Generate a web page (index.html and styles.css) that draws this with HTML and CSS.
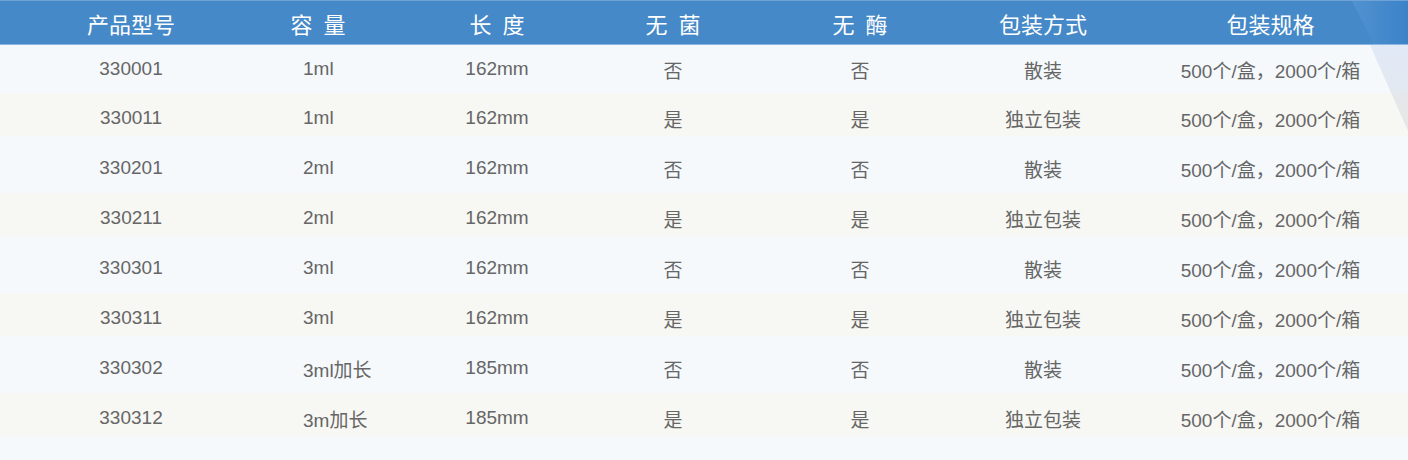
FILE: index.html
```html
<!DOCTYPE html>
<html lang="zh-CN">
<head>
<meta charset="utf-8">
<title>产品规格</title>
<link rel="stylesheet" href="styles.css">
</head>
<body>
<div class="page">
  <div class="table">
    <div class="row head">
      <div class="cell">产品型号</div>
      <div class="cell">容 量</div>
      <div class="cell">长 度</div>
      <div class="cell">无 菌</div>
      <div class="cell">无 酶</div>
      <div class="cell">包装方式</div>
      <div class="cell">包装规格</div>
    </div>
    <div class="row body first">
      <div class="cell">330001</div><div class="cell">1ml</div><div class="cell">162mm</div><div class="cell">否</div><div class="cell">否</div><div class="cell">散装</div><div class="cell">500个/盒，2000个/箱</div>
    </div>
    <div class="row body alt">
      <div class="cell">330011</div><div class="cell">1ml</div><div class="cell">162mm</div><div class="cell">是</div><div class="cell">是</div><div class="cell">独立包装</div><div class="cell">500个/盒，2000个/箱</div>
    </div>
    <div class="row body">
      <div class="cell">330201</div><div class="cell">2ml</div><div class="cell">162mm</div><div class="cell">否</div><div class="cell">否</div><div class="cell">散装</div><div class="cell">500个/盒，2000个/箱</div>
    </div>
    <div class="row body alt">
      <div class="cell">330211</div><div class="cell">2ml</div><div class="cell">162mm</div><div class="cell">是</div><div class="cell">是</div><div class="cell">独立包装</div><div class="cell">500个/盒，2000个/箱</div>
    </div>
    <div class="row body">
      <div class="cell">330301</div><div class="cell">3ml</div><div class="cell">162mm</div><div class="cell">否</div><div class="cell">否</div><div class="cell">散装</div><div class="cell">500个/盒，2000个/箱</div>
    </div>
    <div class="row body alt">
      <div class="cell">330311</div><div class="cell">3ml</div><div class="cell">162mm</div><div class="cell">是</div><div class="cell">是</div><div class="cell">独立包装</div><div class="cell">500个/盒，2000个/箱</div>
    </div>
    <div class="row body">
      <div class="cell">330302</div><div class="cell">3ml加长</div><div class="cell">185mm</div><div class="cell">否</div><div class="cell">否</div><div class="cell">散装</div><div class="cell">500个/盒，2000个/箱</div>
    </div>
    <div class="row body alt">
      <div class="cell">330312</div><div class="cell">3m加长</div><div class="cell">185mm</div><div class="cell">是</div><div class="cell">是</div><div class="cell">独立包装</div><div class="cell">500个/盒，2000个/箱</div>
    </div>
  </div>
  <div class="deco-head"></div>
  <div class="deco-body"></div>
</div>
</body>
</html>
```

FILE: styles.css
```css
html, body {
  margin: 0;
  padding: 0;
  background: #f5f9fc;
}

.page {
  position: relative;
  width: 1408px;
  height: 460px;
  overflow: hidden;
  background: #f5f9fc;
}

.table {
  display: flex;
  flex-direction: column;
}

.row {
  display: grid;
  grid-template-columns: 180px 194px 164px 188px 186px 180px 275px;
  padding-left: 41px;
  height: 50px;
  font-family: "Liberation Sans", "Noto Sans CJK SC", sans-serif;
  font-size: 19px;
  color: #666666;
}

.row.first {
  height: 48px;
}

.row.alt {
  background: linear-gradient(#f7f7f3, #f7f7f3) top left / 100% 43px no-repeat;
}

.cell {
  display: flex;
  align-items: center;
  justify-content: center;
  white-space: nowrap;
}

.row.body .cell:nth-child(2) {
  justify-content: flex-start;
  padding-left: 82px;
}

.row.head {
  height: 43px;
  background: #4589c8;
  border-top: 1px solid #6fa2d6;
  border-bottom: 1px solid #8bb6e0;
  font-family: "Noto Sans CJK SC", sans-serif;
  font-size: 22px;
  color: #ffffff;
  word-spacing: 6px;
}

.deco-head {
  position: absolute;
  top: 1px;
  right: 0;
  width: 56px;
  height: 43px;
  background: linear-gradient(90deg, rgba(95, 155, 215, 0.5), rgba(50, 125, 200, 0.55));
  clip-path: polygon(0 0, 100% 0, 100% 100%, 22px 100%);
}

.deco-body {
  position: absolute;
  top: 45px;
  right: 0;
  width: 38px;
  height: 86px;
  background: linear-gradient(180deg, rgba(200, 215, 240, 0.45), rgba(205, 205, 210, 0.4));
  clip-path: polygon(0 0, 100% 0, 100% 100%);
}
```
